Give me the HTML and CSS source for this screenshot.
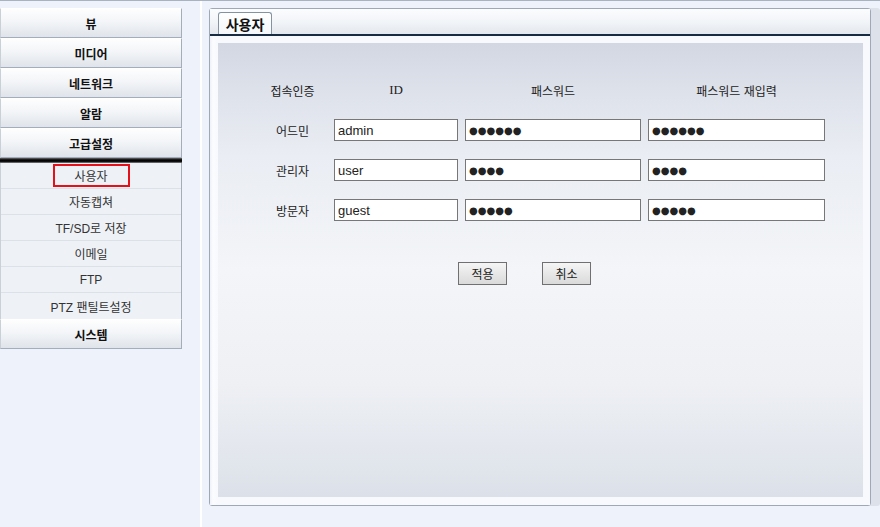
FILE: index.html
```html
<!DOCTYPE html>
<html lang="ko">
<head>
<meta charset="utf-8">
<title>사용자</title>
<link rel="stylesheet" href="styles.css">
</head>
<body>
<div class="page">
  <nav class="sidebar">
    <div class="menu-btn">뷰</div>
    <div class="menu-btn">미디어</div>
    <div class="menu-btn">네트워크</div>
    <div class="menu-btn">알람</div>
    <div class="menu-btn">고급설정</div>
    <div class="black-bar"></div>
    <div class="submenu">
      <div class="sub-item"><span class="sel-box">사용자</span></div>
      <div class="sub-item">자동캡쳐</div>
      <div class="sub-item">TF/SD로 저장</div>
      <div class="sub-item">이메일</div>
      <div class="sub-item">FTP</div>
      <div class="sub-item">PTZ 팬틸트설정</div>
    </div>
    <div class="menu-btn">시스템</div>
  </nav>
  <main class="main">
    <section class="panel">
      <div class="panel-head">
        <div class="tab">사용자</div>
      </div>
      <div class="panel-line"></div>
      <div class="panel-body">
        <div class="content">
          <div class="grid">
            <div class="hd">접속인증</div>
            <div class="hd serif">ID</div>
            <div class="hd">패스워드</div>
            <div class="hd">패스워드 재입력</div>

            <div class="lbl">어드민</div>
            <input class="field" type="text" value="admin">
            <input class="field pw" type="text" value="●●●●●●">
            <input class="field pw" type="text" value="●●●●●●">

            <div class="lbl">관리자</div>
            <input class="field" type="text" value="user">
            <input class="field pw" type="text" value="●●●●">
            <input class="field pw" type="text" value="●●●●">

            <div class="lbl">방문자</div>
            <input class="field" type="text" value="guest">
            <input class="field pw" type="text" value="●●●●●">
            <input class="field pw" type="text" value="●●●●●">
          </div>
          <div class="actions">
            <button class="btn" type="button">적용</button>
            <button class="btn" type="button">취소</button>
          </div>
        </div>
      </div>
    </section>
  </main>
</div>
</body>
</html>
```
FILE: styles.css
```css
* { box-sizing: border-box; }
html, body { margin: 0; padding: 0; }
body {
  background: #eef2fb;
  border-top: 1px solid #a9b3c0;
  font-family: "Noto Sans CJK KR", "Liberation Sans", sans-serif;
  font-size: 12px;
  color: #222;
  width: 880px;
  height: 527px;
  overflow: hidden;
}
.page {
  display: flex;
  height: 526px;
}
.sidebar {
  width: 203px;
  padding-top: 7px;
  border-right: 2px solid #ffffff;
  display: flex;
  flex-direction: column;
}
.menu-btn {
  width: 182px;
  height: 30px;
  display: flex;
  align-items: center;
  justify-content: center;
  font-weight: bold;
  font-size: 12px;
  color: #111;
  background: linear-gradient(#fefefe 0%, #f3f5f8 45%, #dfe4ea 100%);
  border-top: 1px solid #ffffff;
  border-left: 1px solid #c9d0d8;
  border-right: 1px solid #a4aeba;
  border-bottom: 1px solid #a4aeba;
}
.black-bar {
  width: 182px;
  height: 5px;
  background: linear-gradient(#6a6a6a 0%, #000 40%, #111 70%, #8a8a8a 100%);
}
.submenu {
  width: 182px;
  background: #eef1f5;
  border-right: 1px solid #a4aeba;
  border-left: 1px solid #c9d0d8;
}
.sub-item {
  height: 26px;
  display: flex;
  align-items: center;
  justify-content: center;
  border-bottom: 1px solid #dce1e7;
  color: #333;
  font-size: 12px;
  font-family: "Liberation Sans", "Noto Sans CJK KR", sans-serif;
}
.sub-item:last-child { border-bottom: none; }
.sel-box {
  width: 77px;
  height: 23px;
  display: flex;
  align-items: center;
  justify-content: center;
  border: 2px solid #e4101a;
}
.main {
  flex: 1;
  padding: 7px 9px 0 7px;
}
.panel {
  width: 662px;
  height: 498px;
  border: 1px solid #9ea8b6;
  border-radius: 3px;
  background: #f4f6f9;
  box-shadow: 9px 0 0 #dde1ea;
  display: flex;
  flex-direction: column;
}
.panel-head {
  height: 25px;
  background: linear-gradient(#fbfcfe 0%, #f2f5f8 50%, #e3e8ee 100%);
  display: flex;
  align-items: flex-end;
  padding-left: 8px;
}
.tab {
  width: 54px;
  height: 22px;
  border: 1px solid #8493a2;
  border-bottom: none;
  border-radius: 3px 3px 0 0;
  background: linear-gradient(#ffffff, #f5f7fa);
  font-weight: bold;
  font-size: 14px;
  color: #111;
  display: flex;
  align-items: center;
  justify-content: center;
}
.panel-line {
  height: 2px;
  background: #172c42;
}
.panel-body {
  flex: 1;
  padding: 7px 7px 8px 8px;
  background: linear-gradient(90deg, #eef1f6 0px, #fbfcfe 3px, #f7f9fc 8px);
}
.content {
  height: 100%;
  background: linear-gradient(#d2d7e2 0%, #dde1ea 10%, #eaedf3 25%, #f3f5f8 50%, #eef0f4 75%, #dce1e9 100%);
  padding: 36px 0 0 40px;
}
.grid {
  display: grid;
  grid-template-columns: 69px 124px 176px 177px;
  column-gap: 7px;
  grid-template-rows: 22px 22px 22px 22px;
  row-gap: 18px;
  align-items: center;
}
.hd {
  text-align: center;
  font-size: 12px;
  color: #222;
}
.hd.serif {
  font-family: "Liberation Serif", serif;
  font-size: 13px;
}
.lbl {
  text-align: center;
  font-size: 12px;
  color: #222;
}
.field {
  height: 22px;
  width: 100%;
  margin: 0;
  border: 1px solid #777;
  background: #fff;
  font-family: "Liberation Sans", sans-serif;
  font-size: 13px;
  color: #222;
  padding: 0 3px;
  outline: none;
}
.field.pw {
  font-family: "DejaVu Sans", sans-serif;
  font-size: 10px;
  color: #222;
}
.actions {
  display: flex;
  gap: 35px;
  padding-left: 200px;
  margin-top: 41px;
}
.btn {
  width: 49px;
  height: 23px;
  margin: 0;
  padding: 0;
  border: 1px solid #707070;
  background: linear-gradient(#f5f5f5, #dadada);
  font-family: "Noto Sans CJK KR", sans-serif;
  font-size: 12px;
  color: #222;
}
```
